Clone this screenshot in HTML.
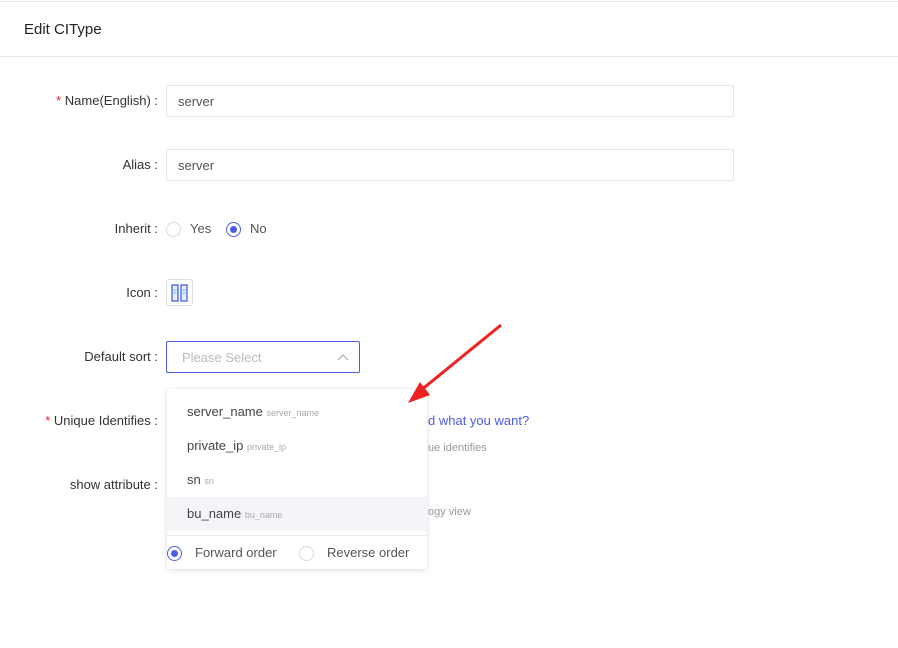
<!DOCTYPE html>
<html><head><style>
*{box-sizing:border-box;margin:0;padding:0}
body{width:898px;height:648px;background:#fff;font-family:"Liberation Sans",sans-serif;position:relative;overflow:hidden;color:#333}
.abs{position:absolute}
.lbl{position:absolute;right:740px;font-size:13px;color:#333;white-space:nowrap}
.inp{position:absolute;left:166px;width:568px;height:32px;border:1px solid #e4e4ea;border-radius:2px;font-size:13px;color:#555;padding:8px 11px}
.radio{position:absolute;width:15px;height:15px;border:1px solid #d9d9d9;border-radius:50%}
.radio.on{border-color:#4c5ce8}
.radio.on:after{content:"";position:absolute;left:3px;top:3px;width:7px;height:7px;border-radius:50%;background:#4c5ce8}
.t{position:absolute;font-size:13px;color:#555;white-space:nowrap}
.item{position:absolute;left:0;width:260px;height:34px;padding-left:20px;font-size:13px;color:#444;line-height:34px}
.item small{font-size:9px;color:#aaa}
</style></head><body>
<div class="abs" style="left:0;top:1px;width:898px;height:1px;background:#e8e8e8"></div>
<div class="abs" style="left:24px;top:21px;font-size:15px;color:#222">Edit CIType</div>
<div class="abs" style="left:0;top:56px;width:898px;height:1px;background:#e8e8e8"></div>

<div class="lbl" style="top:93px"><span style="color:#f5222d">* </span>Name(English) :</div>
<div class="inp" style="top:85px">server</div>
<div class="lbl" style="top:157px">Alias :</div>
<div class="inp" style="top:149px">server</div>
<div class="lbl" style="top:221px">Inherit :</div>
<span class="radio" style="left:166px;top:222px"></span><span class="t" style="left:190px;top:221px">Yes</span>
<span class="radio on" style="left:226px;top:222px"></span><span class="t" style="left:250px;top:221px">No</span>
<div class="lbl" style="top:285px">Icon :</div>
<div class="abs" style="left:166px;top:279px;width:27px;height:27px;border:1px solid #dcdce4;border-radius:3px">
<svg width="25" height="25" viewBox="0 0 25 25"><rect x="5" y="5" width="6" height="16" fill="#e8ecff" stroke="#4c5ce8" stroke-width="1.3"/><rect x="14" y="5" width="6" height="16" fill="#e8ecff" stroke="#4c5ce8" stroke-width="1.3"/><path d="M6.5 10h3M6.5 13h3M15.5 10h3M15.5 13h3" stroke="#3cc" stroke-width="1"/></svg></div>
<div class="lbl" style="top:349px">Default sort :</div>
<div class="abs" style="left:166px;top:341px;width:194px;height:32px;border:1px solid #4c5ce8;border-radius:2px;font-size:13px;color:#bbb;padding:8px 15px">Please Select
<svg class="abs" style="right:10px;top:10px" width="12" height="10"><path d="M1 8L6 3L11 8" stroke="#aaa" fill="none" stroke-width="1.2"/></svg></div>
<div class="lbl" style="top:413px"><span style="color:#f5222d">* </span>Unique Identifies :</div>
<div class="abs" style="left:428px;top:413px;font-size:13px;color:#4c5ce8">d what you want?</div>
<div class="abs" style="left:428px;top:442px;font-size:11px;color:#999">ue identifies</div>
<div class="lbl" style="top:477px">show attribute :</div>
<div class="abs" style="left:428px;top:506px;font-size:11px;color:#999">ogy view</div>

<div class="abs" style="left:167px;top:389px;width:260px;height:180px;background:#fff;border-radius:3px;box-shadow:0 1px 6px rgba(0,0,0,.15)">
<div class="item" style="top:6px">server_name <small>server_name</small></div>
<div class="item" style="top:40px">private_ip <small>private_ip</small></div>
<div class="item" style="top:74px">sn <small>sn</small></div>
<div class="item" style="top:108px;background:#f4f5f9">bu_name <small>bu_name</small></div>
<div class="abs" style="left:0;top:146px;width:260px;height:1px;background:#e8e8e8"></div>
<span class="radio on" style="left:0;top:157px"></span><span class="t" style="left:28px;top:156px">Forward order</span>
<span class="radio" style="left:132px;top:157px"></span><span class="t" style="left:160px;top:156px">Reverse order</span>
</div>

<svg class="abs" style="left:0;top:0" width="898" height="648"><path d="M501 325L420 391" stroke="#f02020" stroke-width="3"/><path d="M408 403L420 382L430 395Z" fill="#f02020"/></svg>
</body></html>
